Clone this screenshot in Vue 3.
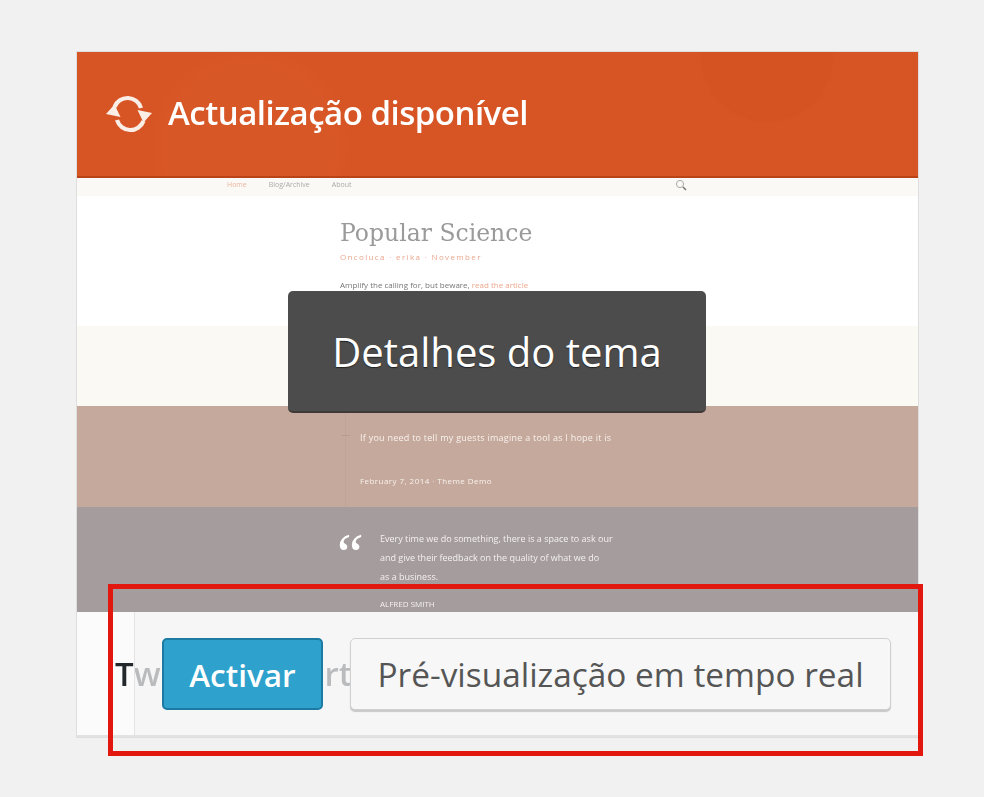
<script setup>
const navItems = ['Home', 'Blog/Archive', 'About']
const quoteLines = [
  'Every time we do something, there is a space to ask our',
  'and give their feedback on the quality of what we do',
  'as a business.'
]
</script>

<template>
  <div class="page">
    <div class="card">
      <header class="banner">
        <span class="glow glow-a"></span>
        <span class="glow glow-b"></span>
        <svg class="refresh" width="48" height="38" viewBox="0 0 48 38" aria-hidden="true">
          <path d="M9.5 12 A14 14 0 0 1 36 13" fill="none" stroke="#fbeee7" stroke-width="4.2" />
          <path d="M38.5 26 A14 14 0 0 1 12 25" fill="none" stroke="#fbeee7" stroke-width="4.2" />
          <path d="M47 18 L32.5 15 L38.5 27.5 Z" fill="#fbeee7" />
          <path d="M1 19 L15.5 22 L9.5 9.5 Z" fill="#fbeee7" />
        </svg>
        <h1 class="banner-title">Actualização disponível</h1>
      </header>

      <div class="preview">
        <nav class="mini-nav">
          <span v-for="(item, i) in navItems" :key="item" :class="{ active: i === 0 }">{{ item }}</span>
          <svg class="mini-search" width="12" height="12" viewBox="0 0 12 12" aria-hidden="true">
            <circle cx="5" cy="5" r="3.6" fill="none" stroke="#aaa" stroke-width="1" />
            <path d="M8 8 L11 11" stroke="#777" stroke-width="1.6" />
          </svg>
        </nav>
        <section class="band band-white">
          <h2 class="mini-title">Popular Science</h2>
          <p class="mini-meta">Oncoluca · erika · November</p>
          <p class="mini-para">Amplify the calling for, but beware, <span>read the article</span></p>
        </section>
        <section class="band band-cream"></section>
        <section class="band band-brown">
          <div class="brown-inner">
            <p>If you need to tell my guests imagine a tool as I hope it is</p>
            <p class="brown-meta">February 7, 2014 · Theme Demo</p>
          </div>
        </section>
        <section class="band band-grey">
          <span class="quote-mark">“</span>
          <div class="quote-body">
            <p v-for="line in quoteLines" :key="line">{{ line }}</p>
            <p class="quote-author">ALFRED SMITH</p>
          </div>
        </section>
        <button class="details" type="button">Detalhes do tema</button>
      </div>

      <footer class="foot">
        <h3 class="theme-name">Twenty Fourteen</h3>
        <div class="actions">
          <button class="btn btn-primary" type="button">Activar</button>
          <button class="btn btn-secondary" type="button">Pré-visualização em tempo real</button>
        </div>
      </footer>
    </div>
    <div class="red-frame"></div>
  </div>
</template>

<style>
body { background: #f1f1f1; }
</style>

<style scoped>
.page {
  position: relative;
  box-sizing: border-box;
  width: 984px;
  height: 797px;
  padding: 52px 0 0 77px;
  overflow: hidden;
  background: #f1f1f1;
  font-family: "Open Sans", "Noto Sans", sans-serif;
}
.card {
  width: 841px;
  box-shadow: 0 0 0 1px #dedede;
  display: flex;
  flex-direction: column;
}
.banner {
  position: relative;
  height: 124px;
  box-sizing: content-box;
  border-bottom: 2px solid #bb4318;
  background: #d75525;
  display: flex;
  align-items: center;
  padding-left: 28px;
  gap: 15px;
  overflow: hidden;
}
.glow { position: absolute; border-radius: 50%; }
.glow-a { width: 132px; height: 132px; left: 624px; top: -62px; background: #d55222; filter: blur(1px); }
.glow-b { width: 190px; height: 190px; left: 78px; top: 0; background: #d85727; filter: blur(6px); }
.refresh { position: relative; flex: none; margin-top: -1px; filter: blur(0.5px); }
.banner-title {
  position: relative;
  margin: -4px 0 0;
  color: #fff;
  font-size: 33px;
  font-weight: 600;
  letter-spacing: -0.5px;
  white-space: nowrap;
  filter: blur(0.5px);
}
.preview { position: relative; display: flex; flex-direction: column; }
.mini-nav {
  height: 18px;
  box-sizing: border-box;
  padding: 0 0 5px 150px;
  background: #fbf9f5;
  display: flex;
  align-items: center;
  gap: 22px;
  font-size: 7px;
  color: #aaa;
}
.mini-nav span { filter: blur(0.4px); }
.mini-nav .active { color: #e8b6a0; }
.mini-search { margin-left: 301px; }
.band { box-sizing: border-box; }
.band-white { height: 130px; background: #fff; padding: 22px 0 0 263px; }
.mini-title {
  margin: 0;
  font-family: "DejaVu Serif", serif;
  font-size: 23.5px;
  line-height: 30px;
  font-weight: 400;
  color: #9a9a9a;
  filter: blur(0.4px);
}
.mini-meta { margin: 3px 0 0; font-size: 8px; line-height: 11px; letter-spacing: 1.35px; color: #eba78e; filter: blur(0.5px); }
.mini-para { margin: 17px 0 0; font-size: 8px; line-height: 11px; color: #777; filter: blur(0.4px); }
.mini-para span { color: #eba78e; }
.band-cream { height: 80px; background: #fbf9f3; }
.band-brown { height: 101px; background: #c5a99c; padding: 0 0 0 268px; }
.brown-inner {
  position: relative;
  height: 100%;
  box-sizing: border-box;
  padding: 26px 0 0 14px;
  border-left: 1px solid #c0a497;
  color: #f8f2ee;
  font-size: 9px;
  line-height: 12px;
  letter-spacing: 0.25px;
}
.brown-inner::before {
  content: "";
  position: absolute;
  left: -4px;
  top: 29px;
  width: 8px;
  height: 1px;
  background: #b59a8d;
}
.brown-inner p { margin: 0; filter: blur(0.5px); }
.brown-inner .brown-meta { margin-top: 31px; font-size: 8px; letter-spacing: 0.45px; }
.band-grey {
  height: 105px;
  background: #a59c9d;
  padding: 22px 0 0 262px;
  display: flex;
  color: #f4f1f1;
  overflow: hidden;
}
.quote-mark {
  width: 41px;
  flex: none;
  margin-left: -8px;
  padding-right: 8px;
  font-family: "Liberation Serif", serif;
  font-style: italic;
  font-size: 60px;
  line-height: 50px;
  color: #fff;
}
.quote-body { font-size: 9px; line-height: 19px; filter: blur(0.5px); white-space: nowrap; }
.quote-body p { margin: 0; }
.quote-body .quote-author { margin-top: 8px; font-size: 8px; }
.details {
  position: absolute;
  left: 211px;
  top: 113px;
  width: 418px;
  height: 122px;
  border: 0;
  border-bottom: 2px solid #3f3a38;
  border-radius: 5px;
  background: #4c4c4c;
  color: #fff;
  font-family: inherit;
  font-size: 40px;
  font-weight: 400;
  text-shadow: 0 1px 1px #222;
  padding: 0;
}
.foot {
  position: relative;
  height: 125px;
  box-sizing: border-box;
  background: #fbfbfb;
  border-bottom: 2px solid #e2e2e2;
  overflow: hidden;
}
.theme-name {
  margin: 0;
  padding: 39px 0 0 38px;
  font-size: 33px;
  line-height: 46px;
  font-weight: 600;
  word-spacing: 26px;
  color: #23282d;
  white-space: nowrap;
  filter: blur(0.5px);
}
.actions {
  position: absolute;
  inset: 0 0 0 57px;
  background: rgba(244, 244, 244, 0.72);
  border-left: 1px solid #e4e4e4;
  display: flex;
  align-items: flex-start;
  gap: 27px;
  padding: 26px 0 0 27px;
}
.btn {
  height: 72px;
  box-sizing: border-box;
  border-radius: 5px;
  font-family: inherit;
  font-size: 33px;
  padding: 0;
  white-space: nowrap;
}
.btn-primary {
  width: 161px;
  background: #2ea2cc;
  border: 2px solid #1b7ba3;
  color: #fff;
  font-size: 31.5px;
  font-weight: 600;
}
.btn-secondary {
  width: 541px;
  background: #f7f7f7;
  border: 1px solid #d0d0d0;
  box-shadow: 0 2px 1px #c8c8c8;
  color: #555;
  font-size: 33.4px;
  font-weight: 400;
}
.red-frame {
  position: absolute;
  left: 108px;
  top: 584px;
  width: 815px;
  height: 172px;
  box-sizing: border-box;
  border: 5px solid #e2180f;
  pointer-events: none;
}
</style>
